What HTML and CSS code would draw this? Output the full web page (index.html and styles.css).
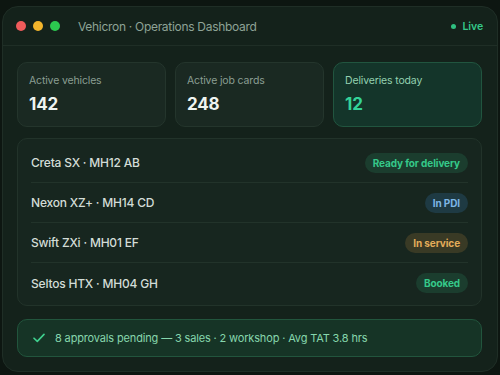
FILE: index.html
```html
<!DOCTYPE html>
<html lang="en">
<head>
<meta charset="utf-8">
<title>Vehicron · Operations Dashboard</title>
<link rel="stylesheet" href="styles.css">
</head>
<body>
<div class="window">
  <header class="titlebar">
    <div class="dots">
      <span class="dot red"></span>
      <span class="dot yellow"></span>
      <span class="dot green"></span>
    </div>
    <div class="title">Vehicron · Operations Dashboard</div>
    <div class="live"><span class="live-dot"></span>Live</div>
  </header>
  <main class="content">
    <section class="stats">
      <div class="stat">
        <div class="stat-label">Active vehicles</div>
        <div class="stat-value">142</div>
      </div>
      <div class="stat">
        <div class="stat-label">Active job cards</div>
        <div class="stat-value">248</div>
      </div>
      <div class="stat stat-accent">
        <div class="stat-label">Deliveries today</div>
        <div class="stat-value">12</div>
      </div>
    </section>
    <section class="list">
      <div class="row"><span class="name">Creta SX · MH12 AB</span><span class="badge badge-green">Ready for delivery</span></div>
      <div class="row"><span class="name">Nexon XZ+ · MH14 CD</span><span class="badge badge-blue">In PDI</span></div>
      <div class="row"><span class="name">Swift ZXi · MH01 EF</span><span class="badge badge-amber">In service</span></div>
      <div class="row"><span class="name">Seltos HTX · MH04 GH</span><span class="badge badge-green">Booked</span></div>
    </section>
    <section class="footer">
      <svg class="check" width="12" height="10" viewBox="0 0 12 10"><path d="M1 5.2 L4.3 8.4 L11 1.4" fill="none" stroke="#3fcf8e" stroke-width="1.6" stroke-linecap="round" stroke-linejoin="round"/></svg>
      <span>8 approvals pending — 3 sales · 2 workshop · Avg TAT 3.8 hrs</span>
    </section>
  </main>
</div>
</body>
</html>
```
FILE: styles.css
```css
* { box-sizing: border-box; }
html, body { margin: 0; padding: 0; }
body {
  width: 500px;
  height: 375px;
  background: #0d1611;
  font-family: Inter, "Noto Sans", sans-serif;
  padding: 6px 2px 0 2px;
  overflow: hidden;
}
.window {
  width: 496px;
  height: 366px;
  background: #14221b;
  border: 1px solid #1f2e26;
  border-radius: 16px;
  display: flex;
  flex-direction: column;
  overflow: hidden;
}
.titlebar {
  height: 39px;
  flex: none;
  display: flex;
  align-items: center;
  padding: 0 14px 0 13px;
  border-bottom: 1px solid #1f2e26;
}
.dots { display: flex; gap: 7px; }
.dot { width: 10px; height: 10px; border-radius: 50%; display: block; }
.red { background: #ef5b5b; }
.yellow { background: #f3b52c; }
.green { background: #2cc94f; }
.title {
  margin-left: 18px;
  font-size: 12px;
  letter-spacing: -0.3px;
  color: #8ea396;
  flex: 1;
}
.live {
  display: flex;
  align-items: center;
  gap: 7px;
  font-size: 10.5px;
  font-weight: 600;
  letter-spacing: -0.1px;
  color: #34c98a;
}
.live-dot { width: 5px; height: 5px; border-radius: 50%; background: #2fbf80; }
.content {
  padding: 16px 15px 15px 14px;
  display: flex;
  flex-direction: column;
  gap: 12px;
  flex: 1;
}
.stats {
  display: grid;
  grid-template-columns: 1fr 1fr 1fr;
  gap: 9px;
}
.stat {
  height: 65px;
  background: #1a2922;
  border: 1px solid #24352c;
  border-radius: 10px;
  padding: 11px 11px 0 11px;
}
.stat-label { font-size: 10.5px; letter-spacing: -0.15px; color: #8a9e92; line-height: 14px; }
.stat-value { font-size: 17px; font-weight: 700; color: #eef4f0; margin-top: 6px; line-height: 20px; letter-spacing: -0.2px; }
.stat-accent { background: #14352a; border-color: #21553f; }
.stat-accent .stat-label { color: #93d1b0; }
.stat-accent .stat-value { color: #34d399; }
.list {
  background: #17261f;
  border: 1px solid #22332a;
  border-radius: 10px;
  padding: 4px 13px 2px 13px;
  margin-top: -1px;
}
.row {
  height: 40px;
  display: flex;
  align-items: center;
  justify-content: space-between;
  border-bottom: 1px solid #22332a;
}
.row:last-child { border-bottom: none; }
.name { font-size: 12px; font-weight: 500; letter-spacing: -0.2px; color: #d3ddd7; }
.badge {
  height: 20px;
  border-radius: 10px;
  padding: 0 8px;
  font-size: 10px;
  font-weight: 700;
  letter-spacing: -0.1px;
  display: flex;
  align-items: center;
}
.badge-green { background: #1b3d2e; color: #35c98a; }
.badge-blue { background: #1e3a43; color: #7cb6e6; }
.badge-amber { background: #393a25; color: #e3ad5a; }
.footer {
  height: 38px;
  background: #163426;
  border: 1px solid #22553d;
  border-radius: 10px;
  display: flex;
  align-items: center;
  padding: 0 15px;
  gap: 10px;
  font-size: 11px;
  letter-spacing: -0.15px;
  color: #86d7ad;
  margin-top: 1px;
}
.check { flex: none; }
```
